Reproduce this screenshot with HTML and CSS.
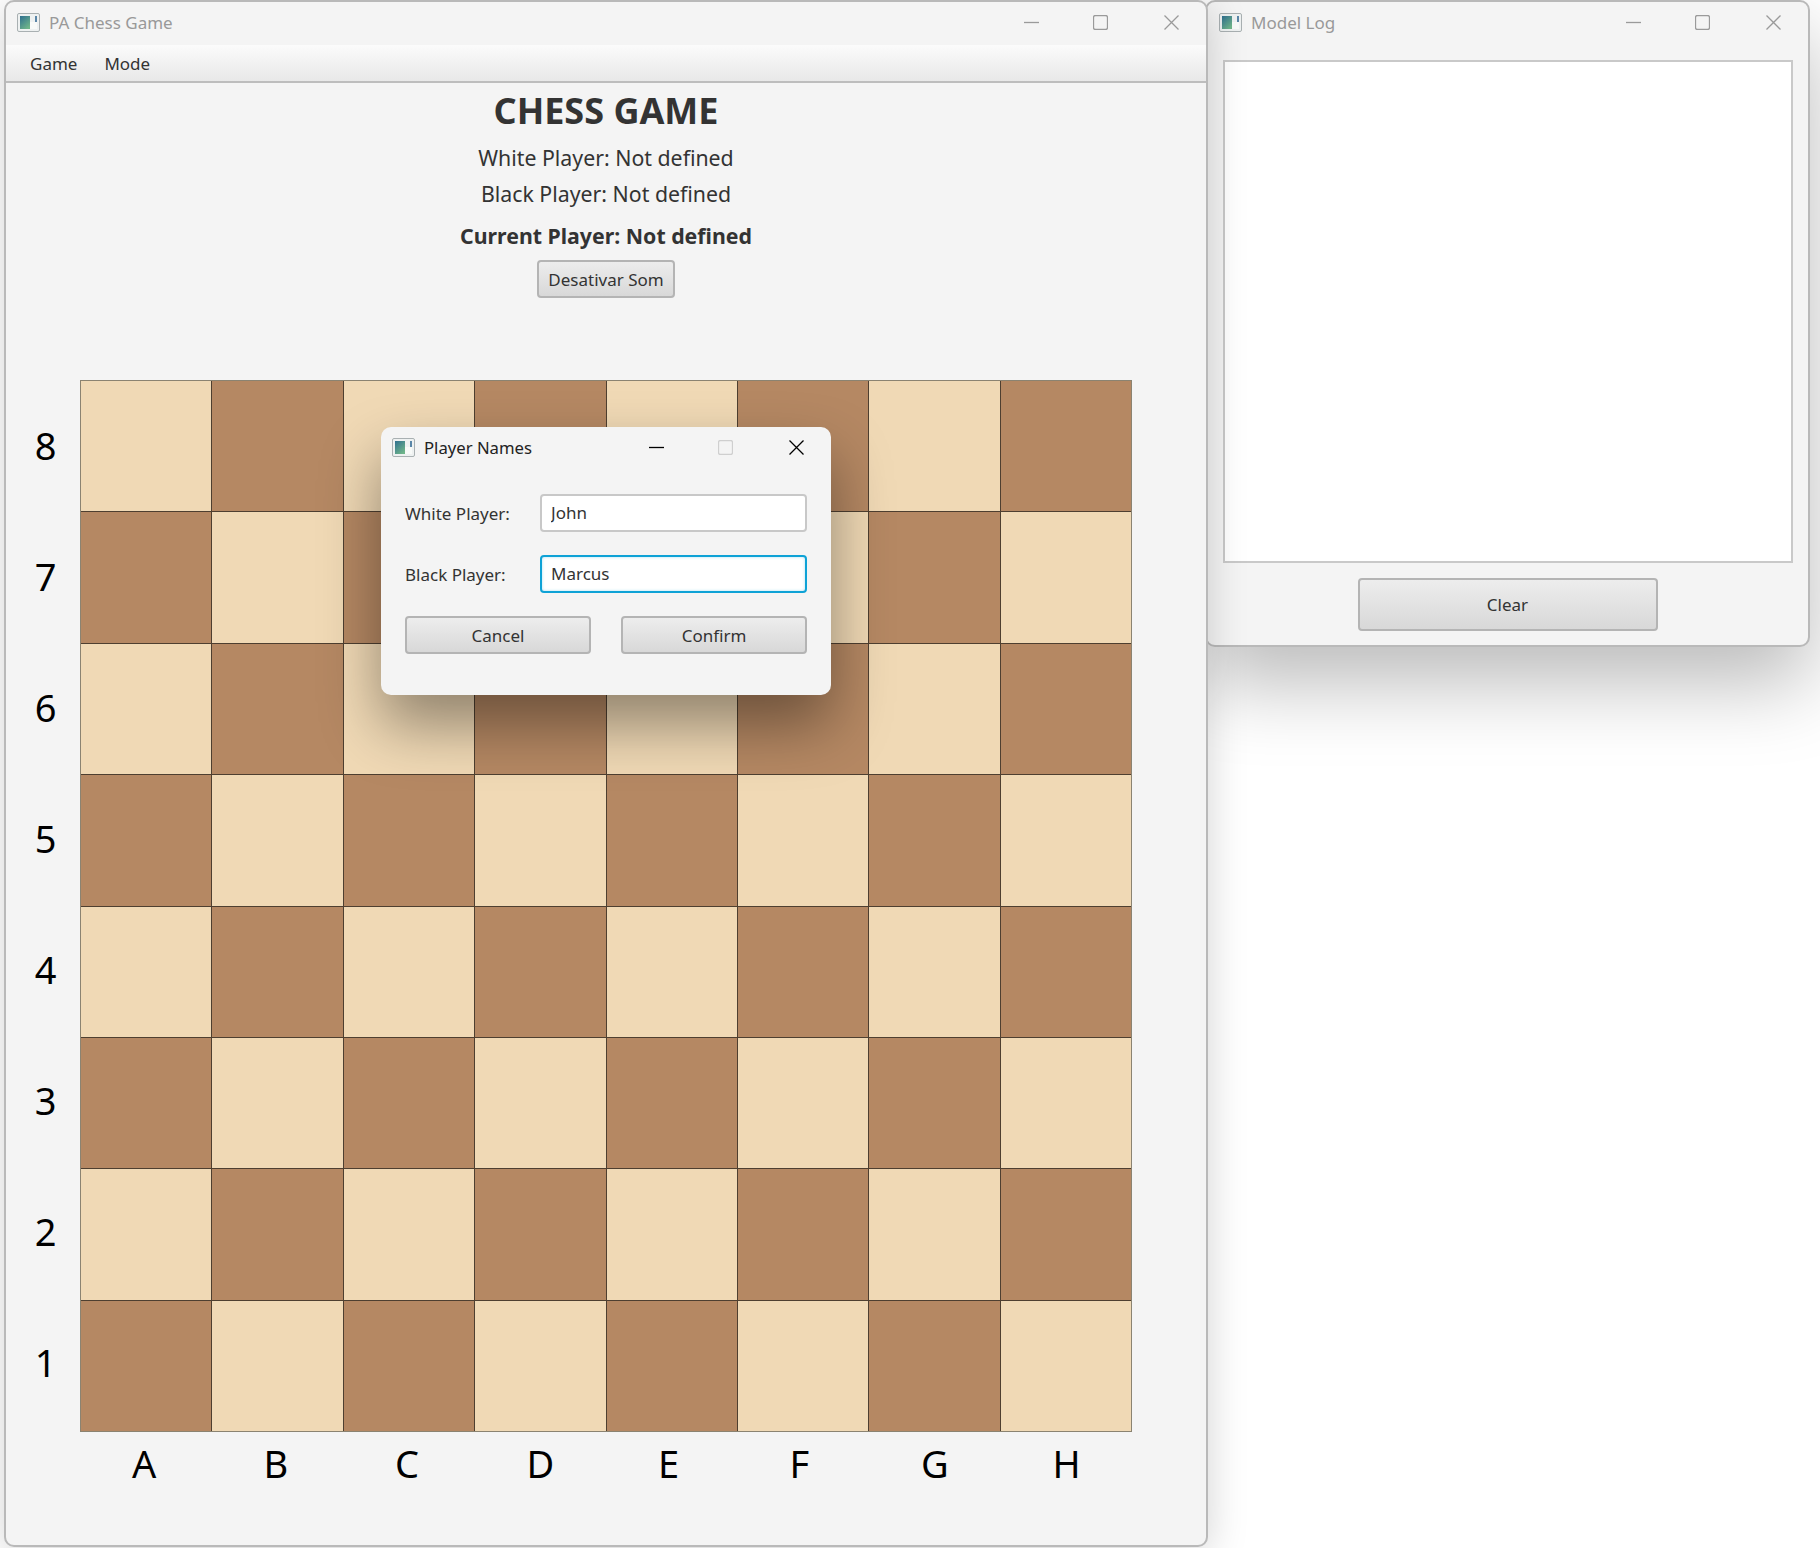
FILE: index.html
```html
<!DOCTYPE html>
<html>
  <head>
    <meta charset="UTF-8" />
    <meta name="viewport" content="width=device-width, initial-scale=1" />
    <title>PA Chess Game</title>
    <link rel="stylesheet" href="styles.css">
  </head>
  <body>
    <svg class="sprite" width="0" height="0">
      <defs>
        <linearGradient id="icon-fill" x1="0" y1="0" x2="0.7" y2="1">
          <stop offset="0" stop-color="#2f6f8f" />
          <stop offset="1" stop-color="#6fb58a" />
        </linearGradient>
        <symbol id="app-icon" viewBox="0 0 23 19">
          <rect x="0.5" y="0.5" width="22" height="18" rx="1.5" fill="#eef1f1" stroke="#a9b0b2" />
          <rect x="3" y="3" width="10" height="13" fill="url(#icon-fill)" />
          <rect x="13" y="9" width="7" height="7" fill="#f8faf8" />
          <rect x="18" y="3" width="2" height="6" fill="#5a86a8" />
        </symbol>
      </defs>
    </svg>

    <!-- Model log window -->
    <div class="window log-window">
      <div class="titlebar inactive">
        <svg class="app-icon"><use href="#app-icon" /></svg>
        <span class="title">Model Log</span>
        <div class="controls">
          <svg class="ctl" viewBox="0 0 15 15"><path d="M0 7.5H15" /></svg>
          <svg class="ctl" viewBox="0 0 15 15"><rect x="0.5" y="0.5" width="14" height="14" rx="2" /></svg>
          <svg class="ctl" viewBox="0 0 15 15"><path d="M0.5 0.5L14.5 14.5M14.5 0.5L0.5 14.5" /></svg>
        </div>
      </div>
      <div class="log-body">
        <div class="log-area"></div>
        <button class="btn clear-btn">Clear</button>
      </div>
    </div>

    <!-- Main window -->
    <div class="window main-window">
      <div class="titlebar inactive">
        <svg class="app-icon"><use href="#app-icon" /></svg>
        <span class="title">PA Chess Game</span>
        <div class="controls">
          <svg class="ctl" viewBox="0 0 15 15"><path d="M0 7.5H15" /></svg>
          <svg class="ctl" viewBox="0 0 15 15"><rect x="0.5" y="0.5" width="14" height="14" rx="2" /></svg>
          <svg class="ctl" viewBox="0 0 15 15"><path d="M0.5 0.5L14.5 14.5M14.5 0.5L0.5 14.5" /></svg>
        </div>
      </div>
      <div class="menubar">
        <span class="menu-item">Game</span>
        <span class="menu-item">Mode</span>
      </div>
      <div class="game">
        <h1 class="game-title">CHESS GAME</h1>
        <div class="player white-line">White Player: Not defined</div>
        <div class="player black-line">Black Player: Not defined</div>
        <div class="current">Current Player: Not defined</div>
        <button class="btn sound-btn">Desativar Som</button>

        <div class="board-area">
          <div class="ranks">
            <span>8</span><span>7</span><span>6</span><span>5</span><span>4</span><span>3</span><span>2</span><span>1</span>
          </div>
          <div class="board">
            <div class="cell light"></div><div class="cell dark"></div><div class="cell light"></div><div class="cell dark"></div><div class="cell light"></div><div class="cell dark"></div><div class="cell light"></div><div class="cell dark"></div>
            <div class="cell dark"></div><div class="cell light"></div><div class="cell dark"></div><div class="cell light"></div><div class="cell dark"></div><div class="cell light"></div><div class="cell dark"></div><div class="cell light"></div>
            <div class="cell light"></div><div class="cell dark"></div><div class="cell light"></div><div class="cell dark"></div><div class="cell light"></div><div class="cell dark"></div><div class="cell light"></div><div class="cell dark"></div>
            <div class="cell dark"></div><div class="cell light"></div><div class="cell dark"></div><div class="cell light"></div><div class="cell dark"></div><div class="cell light"></div><div class="cell dark"></div><div class="cell light"></div>
            <div class="cell light"></div><div class="cell dark"></div><div class="cell light"></div><div class="cell dark"></div><div class="cell light"></div><div class="cell dark"></div><div class="cell light"></div><div class="cell dark"></div>
            <div class="cell dark"></div><div class="cell light"></div><div class="cell dark"></div><div class="cell light"></div><div class="cell dark"></div><div class="cell light"></div><div class="cell dark"></div><div class="cell light"></div>
            <div class="cell light"></div><div class="cell dark"></div><div class="cell light"></div><div class="cell dark"></div><div class="cell light"></div><div class="cell dark"></div><div class="cell light"></div><div class="cell dark"></div>
            <div class="cell dark"></div><div class="cell light"></div><div class="cell dark"></div><div class="cell light"></div><div class="cell dark"></div><div class="cell light"></div><div class="cell dark"></div><div class="cell light"></div>
          </div>
          <div class="files">
            <span>A</span><span>B</span><span>C</span><span>D</span><span>E</span><span>F</span><span>G</span><span>H</span>
          </div>
        </div>
      </div>
    </div>

    <!-- Player names dialog -->
    <div class="dialog">
      <div class="titlebar dialog-bar">
        <svg class="app-icon"><use href="#app-icon" /></svg>
        <span class="title">Player Names</span>
        <div class="controls">
          <svg class="ctl" viewBox="0 0 15 15"><path d="M0 7.5H15" /></svg>
          <svg class="ctl ctl-off" viewBox="0 0 15 15"><rect x="0.5" y="0.5" width="14" height="14" rx="2" /></svg>
          <svg class="ctl" viewBox="0 0 15 15"><path d="M0.5 0.5L14.5 14.5M14.5 0.5L0.5 14.5" /></svg>
        </div>
      </div>
      <div class="dialog-body">
        <div class="form-row">
          <label class="form-label">White Player:</label>
          <input class="field" type="text" value="John" />
        </div>
        <div class="form-row">
          <label class="form-label">Black Player:</label>
          <input class="field focused" type="text" value="Marcus" />
        </div>
        <div class="dialog-buttons">
          <button class="btn">Cancel</button>
          <button class="btn">Confirm</button>
        </div>
      </div>
    </div>
  </body>
</html>
```

FILE: styles.css
```css
html, body {
  margin: 0;
  padding: 0;
}

body {
  position: relative;
  width: 1820px;
  height: 1548px;
  overflow: hidden;
  background: #fff;
  font-family: "Noto Sans", "Open Sans", sans-serif;
  color: #333;
}

.sprite {
  position: absolute;
}

/* Windows */
.window {
  position: absolute;
  box-sizing: border-box;
  display: flex;
  flex-direction: column;
  background: #f4f4f4;
  border: 2px solid #b9b9b9;
  border-radius: 10px;
}

.main-window {
  left: 4px;
  top: 0;
  width: 1204px;
  height: 1547px;
  box-shadow: 0 6px 40px rgba(0,0,0,0.18);
}

.log-window {
  left: 1205px;
  top: 0;
  width: 605px;
  height: 647px;
  box-shadow: 0 36px 80px rgba(0,0,0,0.27);
}

.log-window .titlebar {
  padding-left: 12px;
}

/* Title bars */
.titlebar {
  display: flex;
  align-items: center;
  flex-shrink: 0;
  height: 41px;
  padding-left: 11px;
  padding-bottom: 2px;
}

.app-icon {
  width: 23px;
  height: 19px;
  margin-right: 9px;
  flex-shrink: 0;
}

.title {
  font-size: 17px;
}

.inactive .title {
  color: #999;
}

.controls {
  display: flex;
  align-items: center;
  gap: 55px;
  margin-left: auto;
  margin-right: 27px;
}

.ctl {
  width: 15px;
  height: 15px;
  fill: none;
  stroke: #000;
  stroke-width: 1.3;
}

/* the maximize box sits a pixel closer to minimize than to close */
.ctl:nth-child(2) {
  margin: 0 1px 0 -1px;
}

.inactive .ctl {
  stroke: #9a9a9a;
}

.ctl-off {
  stroke: #cfcfcf;
}

/* Menu */
.menubar {
  display: flex;
  align-items: center;
  gap: 27px;
  box-sizing: border-box;
  height: 38px;
  padding-left: 24px;
  background: linear-gradient(#fbfbfb, #e8e8e8);
  border-bottom: 2px solid #bdbdbd;
  font-size: 17px;
}

/* Game area */
.game {
  display: flex;
  flex-direction: column;
  align-items: center;
}

.game-title {
  margin: 4px 0 0;
  font-size: 36px;
  line-height: 48px;
  font-weight: bold;
}

.player {
  font-size: 21.3px;
  line-height: 32px;
}

.white-line {
  margin-top: 7px;
}

.black-line {
  margin-top: 4px;
}

.current {
  margin-top: 11px;
  font-size: 21.3px;
  line-height: 30px;
  font-weight: bold;
}

/* Buttons */
.btn {
  box-sizing: border-box;
  height: 38px;
  padding: 0;
  font-family: inherit;
  font-size: 17px;
  color: #333;
  background: linear-gradient(#ededed, #d8d8d8);
  border: 2px solid #b4b4b4;
  border-radius: 4px;
}

.sound-btn {
  width: 138px;
  margin-top: 9px;
}

/* Board */
.board-area {
  display: grid;
  grid-template-columns: 74px 1052px;
  margin-top: 82px;
  align-self: flex-start;
}

.ranks {
  display: grid;
  grid-template-rows: repeat(8, 1fr);
  justify-items: center;
  align-items: center;
  padding-left: 5px;
  padding-bottom: 5px;
  font-size: 38px;
  color: #000;
}

.board {
  display: grid;
  grid-template-columns: repeat(8, 1fr);
  grid-auto-rows: 130.375px;
  gap: 1px;
  background: #4e3f30;
  border: 1px solid #8b8371;
}

.cell.light {
  background: #f0d9b5;
}

.cell.dark {
  background: #b58863;
}

/* labels under the board start at a fixed offset in each column */
.files {
  grid-column: 2;
  display: grid;
  grid-template-columns: repeat(8, 1fr);
  justify-items: start;
  margin-top: 5px;
  font-size: 38px;
  line-height: 52px;
  color: #000;
}

.files span {
  padding-left: 52px;
}

/* Log window */
.log-body {
  display: flex;
  flex-direction: column;
  align-items: center;
  padding: 15px 16px 0;
}

.log-area {
  box-sizing: border-box;
  width: 570px;
  height: 503px;
  background: #fff;
  border: 2px solid #c9c9c9;
}

.clear-btn {
  width: 300px;
  height: 53px;
  margin-top: 15px;
}

/* Dialog */
.dialog {
  position: absolute;
  left: 381px;
  top: 427px;
  width: 450px;
  height: 268px;
  box-sizing: border-box;
  background: #f4f4f4;
  border-radius: 10px;
  box-shadow: 0 30px 60px rgba(0,0,0,0.4);
}

.dialog-bar {
  color: #222;
}

.dialog-bar .title {
  font-size: 16.7px;
}

.dialog-body {
  display: flex;
  flex-direction: column;
  gap: 23px;
  padding: 24px 24px 0;
}

.form-row {
  display: flex;
  align-items: center;
}

.form-label {
  width: 135px;
  font-size: 17px;
}

.field {
  box-sizing: border-box;
  width: 267px;
  height: 38px;
  padding: 0 0 1px 9px;
  font-family: inherit;
  font-size: 17px;
  color: #333;
  background: #fff;
  border: 2px solid #c8c8c8;
  border-radius: 4px;
  outline: none;
}

.field.focused {
  border-color: #0ea2d6;
  box-shadow: inset 0 0 3px rgba(14,162,214,0.35);
}

.dialog-buttons {
  display: flex;
  justify-content: space-between;
}

.dialog-buttons .btn {
  width: 186px;
}
```
